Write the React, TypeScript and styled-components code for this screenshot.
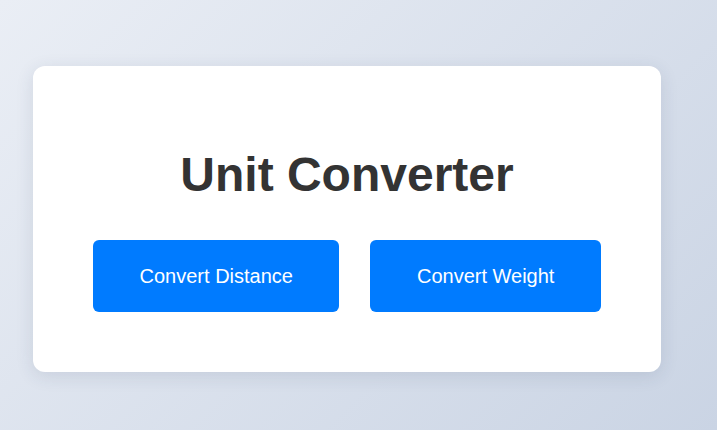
import React from 'react';
import styled, { createGlobalStyle } from 'styled-components';

const GlobalStyle = createGlobalStyle`
  html, body {
    margin: 0;
    padding: 0;
    height: 100%;
  }
  body {
    font-family: 'Liberation Sans', Arial, sans-serif;
    background: linear-gradient(135deg, #eaeef5 0%, #cad4e4 100%);
    background-attachment: fixed;
  }
  #root {
    min-height: 100vh;
  }
`;

const Page = styled.div`
  display: flex;
  align-items: flex-start;
  min-height: 100vh;
  box-sizing: border-box;
  padding: 66px 0 0 33px;
`;

const Card = styled.div`
  display: flex;
  flex-direction: column;
  align-items: center;
  width: 628px;
  box-sizing: border-box;
  padding: 60px;
  background: #ffffff;
  border-radius: 12px;
  box-shadow: 0 4px 18px rgba(40, 55, 90, 0.12);
`;

const Title = styled.h1`
  margin: 21px 0 38px;
  font-size: 48px;
  font-weight: bold;
  color: #333333;
`;

const Actions = styled.div`
  display: flex;
  gap: 31px;
`;

const Button = styled.button`
  flex-shrink: 0;
  white-space: nowrap;
  padding: 24px 46.5px;
  border: none;
  border-radius: 6px;
  background: #007bff;
  color: #ffffff;
  font-family: 'Liberation Sans', Arial, sans-serif;
  font-size: 20px;
  line-height: 24px;
  cursor: pointer;

  &:hover {
    background: #0069d9;
  }
`;

const App: React.FC = () => (
  <>
    <GlobalStyle />
    <Page>
      <Card>
        <Title>Unit Converter</Title>
        <Actions>
          <Button>Convert Distance</Button>
          <Button>Convert Weight</Button>
        </Actions>
      </Card>
    </Page>
  </>
);

export default App;
